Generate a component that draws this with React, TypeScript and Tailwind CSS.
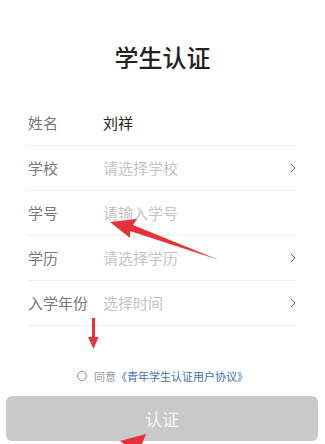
const rows = [
  { label: "姓名", value: "刘祥", filled: true, arrow: false },
  { label: "学校", value: "请选择学校", filled: false, arrow: true },
  { label: "学号", value: "请输入学号", filled: false, arrow: false },
  { label: "学历", value: "请选择学历", filled: false, arrow: true },
  { label: "入学年份", value: "选择时间", filled: false, arrow: true },
];

function Chevron() {
  return (
    <svg width="6" height="10" viewBox="0 0 6 10" className="mr-[1px] shrink-0">
      <path d="M1 1l4 4-4 4" fill="none" stroke="#666" strokeWidth="1" />
    </svg>
  );
}

export default function App() {
  return (
    <div
      className="relative h-[444px] w-[325px] overflow-hidden bg-white"
      style={{ fontFamily: '"Noto Sans CJK SC", "Noto Sans", sans-serif' }}
    >
      <h1 className="pt-[41px] text-center text-[24px] leading-[32px] font-medium text-[#222]">
        学生认证
      </h1>

      <div className="mt-[28px] px-[28px]">
        {rows.map((r) => (
          <div
            key={r.label}
            className="flex h-[45px] items-center border-b border-[#eeeeee]"
          >
            <span className="w-[75px] shrink-0 text-[15px] text-[#777]">{r.label}</span>
            <span
              className={`flex-1 text-[15px] ${r.filled ? "text-[#222]" : "text-[#c4c4c4]"}`}
            >
              {r.value}
            </span>
            {r.arrow && <Chevron />}
          </div>
        ))}
      </div>

      <div className="mt-[42px] flex items-center justify-center text-[11px] leading-[16px]">
        <span className="mr-[7px] h-[10px] w-[10px] rounded-full border border-[#888]" />
        <span className="text-[#999]">同意</span>
        <span className="text-[#3b6fc2]">《青年学生认证用户协议》</span>
      </div>

      <button className="mx-[6px] mt-[12px] flex h-[45px] w-[312px] items-center justify-center rounded-[6px] bg-[#c9c9c9] text-[17px] text-[#f4f4f4]">
        认证
      </button>

      {/* annotation arrows drawn over the screenshot */}
      <svg
        className="pointer-events-none absolute inset-0"
        width="325"
        height="444"
        viewBox="0 0 325 444"
      >
        <polygon points="110,222 137,219 133,225 219,260 130,231 130,238" fill="#e8323a" />
        <polygon points="92,318 95,318 95,337 98.5,337 93.5,349 88,337 92,337" fill="#e8323a" />
        <polygon points="146,434 120,441 124,444 142,444" fill="#e8323a" />
      </svg>
    </div>
  );
}
